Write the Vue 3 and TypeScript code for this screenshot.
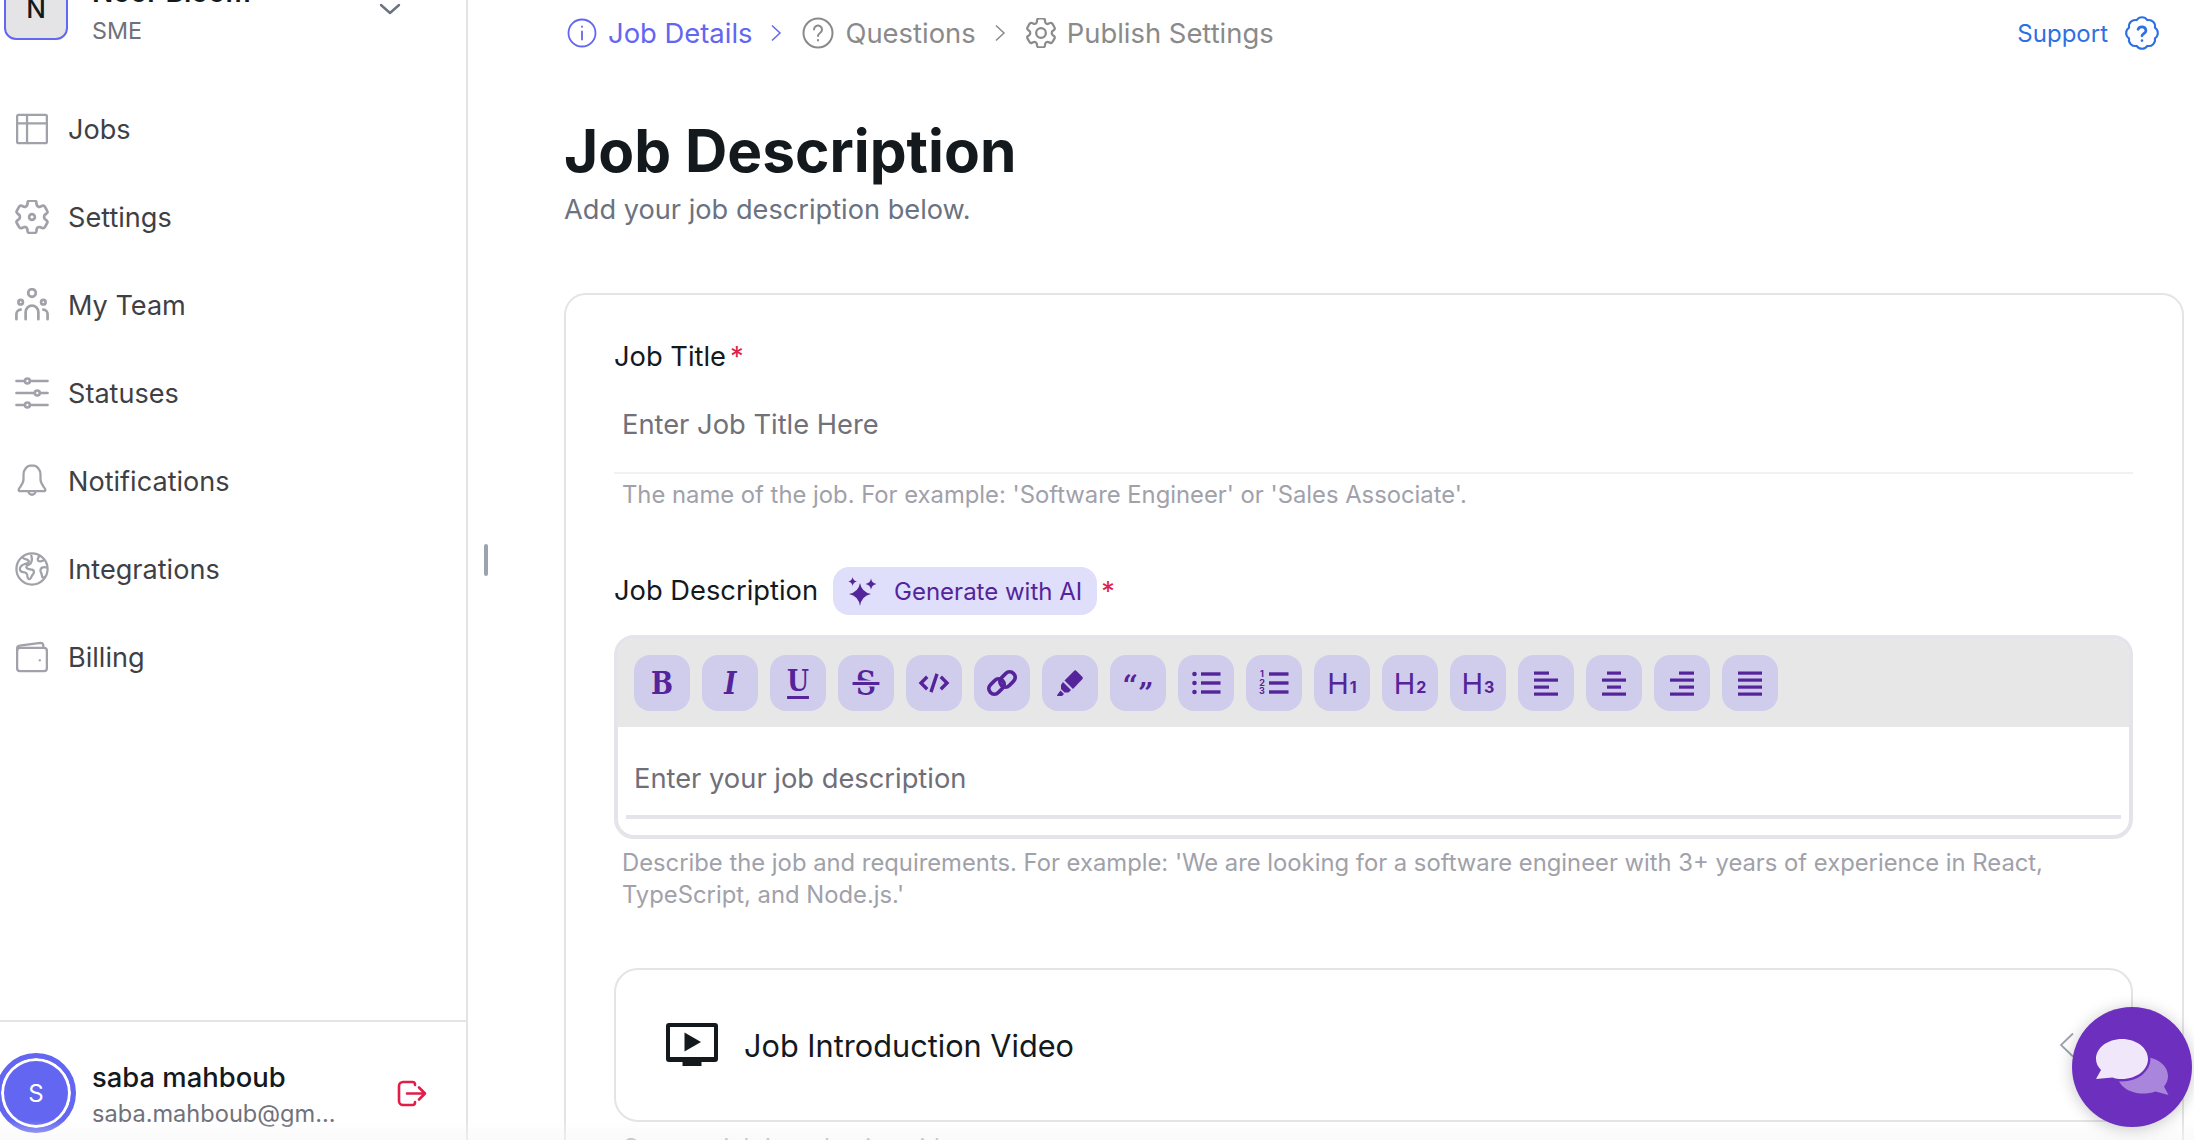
<script setup lang="ts">
interface NavItem {
  label: string
  paths: string[]
  box?: string
  stroke?: number
}

const gearPath =
  'M9.6 3.9c.1-.5.6-.9 1.1-.9h2.6c.5 0 1 .4 1.1.9l.2 1.3c.1.4.3.7.6.9l.2.1c.3.2.7.3 1.1.1l1.2-.5c.5-.2 1.1 0 1.4.5l1.3 2.3c.3.5.2 1.1-.3 1.4l-1 .8c-.3.3-.4.6-.4 1v.3c0 .4.1.7.4 1l1 .8c.4.4.5 1 .3 1.4l-1.3 2.3c-.3.5-.9.7-1.4.5l-1.2-.5c-.4-.1-.8-.1-1.1.1l-.2.1c-.3.2-.5.5-.6.9l-.2 1.3c-.1.5-.6.9-1.1.9h-2.6c-.5 0-1-.4-1.1-.9l-.2-1.3c-.1-.4-.3-.7-.6-.9l-.2-.1c-.3-.2-.7-.3-1.1-.1l-1.2.5c-.5.2-1.1 0-1.4-.5l-1.3-2.3c-.3-.5-.2-1.1.3-1.4l1-.8c.3-.3.4-.6.4-1v-.3c0-.4-.1-.7-.4-1l-1-.8c-.4-.4-.5-1-.3-1.4l1.3-2.3c.3-.5.9-.7 1.4-.5l1.2.5c.4.1.8.1 1.1-.1l.2-.1c.3-.2.5-.5.6-.9z'

const nav: NavItem[] = [
  { label: 'Jobs', paths: ['M1.5 3a1 1 0 0 1 1-1h19a1 1 0 0 1 1 1v18a1 1 0 0 1-1 1h-19a1 1 0 0 1-1-1z', 'M1.5 8h21', 'M8.5 2v20'] },
  {
    label: 'Settings',
    box: '2.6 2.6 18.8 18.8',
    stroke: 1.5,
    paths: [gearPath, 'M10.4 12a1.6 1.6 0 1 0 3.2 0 1.6 1.6 0 1 0-3.2 0z'],
  },
  {
    label: 'My Team',
    stroke: 1.9,
    paths: [
      'M9.3 3.5a2.7 2.7 0 1 0 5.4 0 2.7 2.7 0 1 0-5.4 0z',
      'M2.4 10a1.6 1.6 0 1 0 3.2 0 1.6 1.6 0 1 0-3.2 0z',
      'M18.4 10a1.6 1.6 0 1 0 3.2 0 1.6 1.6 0 1 0-3.2 0z',
      'M7.5 22v-5a4.5 4.5 0 0 1 9 0v5',
      'M1 22v-3.5a3.2 3.2 0 0 1 3-3.2',
      'M23 22v-3.5a3.2 3.2 0 0 0-3-3.2',
    ],
  },
  {
    label: 'Statuses',
    stroke: 1.8,
    paths: [
      'M1 3.5h6M10.5 3.5H23',
      'M1 12h13M17.5 12H23',
      'M1 20.5h6M10.5 20.5H23',
      'M7 3.5a1.75 1.75 0 1 0 3.5 0 1.75 1.75 0 1 0-3.5 0z',
      'M14 12a1.75 1.75 0 1 0 3.5 0 1.75 1.75 0 1 0-3.5 0z',
      'M7 20.5a1.75 1.75 0 1 0 3.5 0 1.75 1.75 0 1 0-3.5 0z',
    ],
  },
  {
    label: 'Notifications',
    paths: [
      'M12 1C8.2 1 6 4 6 7.5V11c0 3-2.5 5-3.4 7-.2.7.3 1.2 1 1.2h16.8c.7 0 1.2-.5 1-1.2-.9-2-3.4-4-3.4-7V7.5C18 4 15.8 1 12 1z',
      'M9.5 19.2a2.5 2.5 0 0 0 5 0',
    ],
  },
  {
    label: 'Integrations',
    paths: [
      'M1 12a11 11 0 1 0 22 0 11 11 0 1 0-22 0z',
      'M5.5 4c1 1.5 3 1 4 2s-1 2-2.5 2.5S3 10 3.5 12.5s3 1 4.5 2.5 0 3 1.5 4 2-2 3-3 1.5-3-.5-3.5-4-.5-4-2 2-1 3-2.5 1-4 .5-5.5',
      'M17 3c-1 1.5-1.5 3 0 3.5s2 0 3-.5',
      'M22.5 11c-2-.5-4 0-4.5 1.5s1 2.5 1 4 1 2 2 1',
    ],
  },
  {
    label: 'Billing',
    paths: [
      'M1.5 7.5a2 2 0 0 1 2-2h17a2 2 0 0 1 2 2V20a2 2 0 0 1-2 2h-17a2 2 0 0 1-2-2z',
      'M1.5 7.5V6a2 2 0 0 1 1.8-2L18 2a2 2 0 0 1 2 2v1.5',
      'M17.4 14.3h.2',
    ],
  },
]

interface Tool {
  key: string
  text?: string
  sub?: string
  cls?: string
}

const tools: Tool[] = [
  { key: 'bold', text: 'B', cls: 'slab' },
  { key: 'italic', text: 'I', cls: 'slab slant' },
  { key: 'underline', text: 'U', cls: 'slab under' },
  { key: 'strike', text: 'S', cls: 'slab strike' },
  { key: 'code' },
  { key: 'link' },
  { key: 'marker' },
  { key: 'quote' },
  { key: 'ul' },
  { key: 'ol' },
  { key: 'h1', text: 'H', sub: '1' },
  { key: 'h2', text: 'H', sub: '2' },
  { key: 'h3', text: 'H', sub: '3' },
  { key: 'left' },
  { key: 'center' },
  { key: 'right' },
  { key: 'justify' },
]

const alignBars: Record<string, [number, number][]> = {
  left: [[16, 31], [16, 40], [16, 31], [16, 40]],
  center: [[21, 35], [16, 40], [21, 35], [16, 40]],
  right: [[25, 40], [16, 40], [25, 40], [16, 40]],
  justify: [[16, 40], [16, 40], [16, 40], [16, 40]],
}
</script>

<template>
  <div class="page">
    <aside class="sidebar">
      <div class="org">
        <div class="org-avatar">N</div>
        <div class="org-text">
          <div class="org-name">Noor Bloom</div>
          <div class="org-role">SME</div>
        </div>
        <svg class="org-chevron" width="22" height="12" viewBox="0 0 22 12" fill="none" stroke="#6b7280" stroke-width="2.4" stroke-linecap="round" stroke-linejoin="round">
          <path d="M2 2l9 8 9-8" />
        </svg>
      </div>

      <nav class="nav">
        <a v-for="item in nav" :key="item.label" class="nav-item">
          <svg
            width="34"
            height="34"
            :viewBox="item.box ?? '0 0 24 24'"
            fill="none"
            stroke="#a1a1aa"
            :stroke-width="item.stroke ?? 1.6"
            stroke-linecap="round"
            stroke-linejoin="round"
          >
            <path v-for="d in item.paths" :key="d" :d="d" />
          </svg>
          <span>{{ item.label }}</span>
        </a>
      </nav>

      <div class="account">
        <div class="account-avatar"><span>S</span></div>
        <div class="account-text">
          <div class="account-name">saba mahboub</div>
          <div class="account-mail">saba.mahboub@gm...</div>
        </div>
        <svg class="logout" width="30" height="27" viewBox="0 0 30 27" fill="none" stroke="#e11d48" stroke-width="2.6" stroke-linecap="round" stroke-linejoin="round">
          <path d="M18 5V4.5A2.5 2.5 0 0 0 15.5 2H6a4 4 0 0 0-4 4v15a4 4 0 0 0 4 4h9.5a2.5 2.5 0 0 0 2.5-2.5V22" />
          <path d="M10 13.5h18M22 7.5l6 6-6 6" />
        </svg>
      </div>
    </aside>

    <main class="main">
      <header class="topbar">
        <div class="steps">
          <div class="step active">
            <svg width="30" height="30" viewBox="0 0 30 30" fill="none" stroke="currentColor" stroke-width="1.8" stroke-linecap="round">
              <circle cx="15" cy="15" r="13.5" />
              <path d="M15 13.5v8M15 8.5v.4" />
            </svg>
            <span>Job Details</span>
          </div>
          <svg class="sep active-sep" width="12" height="18" viewBox="0 0 12 18" fill="none" stroke="currentColor" stroke-width="1.5">
            <path d="M2 1.5l8 7.5-8 7.5" />
          </svg>
          <div class="step">
            <svg width="32" height="32" viewBox="0 0 32 32" fill="none" stroke="currentColor" stroke-width="2" stroke-linecap="round">
              <circle cx="16" cy="16" r="14.5" />
              <path d="M12 12.5a4 4 0 1 1 6 3.5c-1.3.8-2 1.500-2 3M16 23v.4" />
            </svg>
            <span>Questions</span>
          </div>
          <svg class="sep" width="12" height="18" viewBox="0 0 12 18" fill="none" stroke="currentColor" stroke-width="1.5">
            <path d="M2 1.5l8 7.5-8 7.5" />
          </svg>
          <div class="step">
            <svg width="30" height="30" viewBox="2.7 2.7 18.6 18.6" fill="none" stroke="currentColor" stroke-width="1.4" stroke-linejoin="round">
              <path :d="gearPath" />
              <circle cx="12" cy="12" r="3" />
            </svg>
            <span>Publish Settings</span>
          </div>
        </div>
        <a class="support">
          <span>Support</span>
          <svg width="38" height="38" viewBox="0 0 24 24" fill="none" stroke="currentColor" stroke-width="1.3" stroke-linecap="round" stroke-linejoin="round">
            <path d="M3.85 8.62a4 4 0 0 1 4.78-4.77 4 4 0 0 1 6.74 0 4 4 0 0 1 4.78 4.78 4 4 0 0 1 0 6.74 4 4 0 0 1-4.77 4.78 4 4 0 0 1-6.75 0 4 4 0 0 1-4.78-4.77 4 4 0 0 1 0-6.76Z" />
            <path stroke-width="1.7" d="M9.5 9.7a2.6 2.6 0 0 1 5 .8c0 1.7-2.5 2-2.5 3.3M12 16.8h.01" />
          </svg>
        </a>
      </header>

      <h1 class="title">Job Description</h1>
      <p class="subtitle">Add your job description below.</p>

      <section class="card">
        <label class="label">Job Title<em>*</em></label>
        <div class="input">Enter Job Title Here</div>
        <p class="hint first">The name of the job. For example: 'Software Engineer' or 'Sales Associate'.</p>

        <div class="desc-label">
          <label class="label">Job Description</label>
          <button type="button" class="ai-chip">
            <svg width="29" height="29" viewBox="0 0 29 29" fill="currentColor">
              <path d="M12 6Q13.5 15 23 17 13.5 19 12 29 10.5 19 1 17 10.5 15 12 6Z" />
              <path d="M4.6 0Q5.2 3.8 9 4.5 5.2 5.2 4.6 9 4 5.2 .2 4.5 4 3.8 4.6 0Z" />
              <path d="M23 1.5Q23.8 6.2 28.5 7 23.8 7.8 23 12.5 22.2 7.8 17.5 7 22.2 6.2 23 1.5Z" />
            </svg>
            <span>Generate with AI</span>
          </button>
          <em class="star">*</em>
        </div>

        <div class="editor">
          <div class="toolbar">
            <button v-for="tool in tools" :key="tool.key" type="button" class="tool" :class="tool.cls">
              <template v-if="tool.text">
                <span class="glyph">{{ tool.text }}</span><sub v-if="tool.sub">{{ tool.sub }}</sub>
              </template>
              <svg v-else width="56" height="56" viewBox="0 0 56 56" fill="currentColor">
                <g v-if="tool.key === 'code'" fill="none" stroke="currentColor" stroke-width="3.4" stroke-linecap="square">
                  <path d="M20 23l-5 5 5 5M36 23l5 5-5 5M30.5 20.5l-5 15" />
                </g>
                <g v-else-if="tool.key === 'link'" fill="none" stroke="currentColor" stroke-width="3.8">
                  <rect x="14" y="26" width="17" height="11" rx="5.5" transform="rotate(-45 22.5 31.5)" />
                  <rect x="25" y="19" width="17" height="11" rx="5.5" transform="rotate(-45 33.5 24.5)" />
                </g>
                <g v-else-if="tool.key === 'marker'">
                  <path d="M34 15.5l6.5 6.5q.8 1 0 2L31 34 22.5 25.5 32.5 15.5q.8-.6 1.5 0z" />
                  <path d="M21 27l8 8-2.5 2.5h-4l-3.5-3.5v-4z" />
                  <path d="M18.5 35.5l3.5 3.5-2 2h-4.5q-.8-.5-.2-1.3z" />
                </g>
                <text v-else-if="tool.key === 'quote'" x="28" y="40" text-anchor="middle" class="quote">“<tspan dy="8">”</tspan></text>
                <g v-else-if="tool.key === 'ul'">
                  <circle v-for="y in [19, 28, 37]" :key="y" cx="16.5" :cy="y" r="2.3" />
                  <rect v-for="y in [19, 28, 37]" :key="y" x="23" :y="y - 1.7" width="19.5" height="3.4" />
                </g>
                <g v-else-if="tool.key === 'ol'">
                  <text v-for="(n, i) in [1, 2, 3]" :key="n" x="16" :y="22 + i * 8.6" text-anchor="middle" class="mini">{{ n }}</text>
                  <rect v-for="y in [19, 28, 37]" :key="y" x="23" :y="y - 1.7" width="19.5" height="3.4" />
                </g>
                <g v-else>
                  <rect
                    v-for="(bar, i) in alignBars[tool.key]"
                    :key="i"
                    :x="bar[0]"
                    :y="16.5 + i * 7"
                    :width="bar[1] - bar[0]"
                    height="3.2"
                  />
                </g>
              </svg>
            </button>
          </div>
          <div class="editor-body">
            <div class="editor-placeholder">Enter your job description</div>
          </div>
        </div>
        <p class="hint">Describe the job and requirements. For example: 'We are looking for a software engineer with 3+ years of experience in React, TypeScript, and Node.js.'</p>

        <div class="video-card">
          <svg width="52" height="44" viewBox="0 0 52 44" fill="#14191d">
            <path fill-rule="evenodd" d="M3 0h46a3 3 0 0 1 3 3v33a3 3 0 0 1-3 3H3a3 3 0 0 1-3-3V3a3 3 0 0 1 3-3zm1 4v30h44V4z" />
            <path d="M18.5 9.5L35 19 18.5 28.5z" />
            <rect x="16.5" y="38" width="19" height="5" />
          </svg>
          <span>Job Introduction Video</span>
          <svg class="video-chevron" width="16" height="26" viewBox="0 0 16 26" fill="none" stroke="#9ca3af" stroke-width="1.8">
            <path d="M14 1.5L2 13l12 11.5" />
          </svg>
        </div>
        <p class="hint video-hint">Create a job introduction video</p>
      </section>
    </main>

    <div class="handle"></div>
    <div class="fade"></div>
    <button type="button" class="chat">
      <svg width="120" height="120" viewBox="0 0 120 120">
        <path fill="#a985dc" d="M71 50c14 0 25 8.5 25 19 0 4-1.6 7.5-4 10.5l4.5 8.5-13-3.5c-4 1.5-8 2-12.5 2-14 0-25-8-25-17.5S57 50 71 50z" />
        <ellipse cx="50" cy="52" rx="28.5" ry="22.5" fill="#6d2fbd" />
        <path fill="#f0e8fa" d="M50 32c14.4 0 26 8.9 26 20s-11.6 20-26 20c-3.500 0-6.500-.5-9.500-1.500L24 72l5-9c-3-3-5-7-5-11 0-11.100 11.600-20 26-20z" />
      </svg>
    </button>
  </div>
</template>

<style>
html,
body {
  margin: 0;
  height: 100%;
  overflow: hidden;
  background: #fff;
}
</style>

<style scoped>
.page {
  position: relative;
  display: flex;
  height: 1140px;
  overflow: hidden;
  background: #fff;
  color: #14191d;
  font-family: Inter, 'Liberation Sans', sans-serif;
}

.sidebar {
  display: flex;
  flex: 0 0 468px;
  flex-direction: column;
  box-sizing: border-box;
  border-right: 2px solid #e4e4e7;
}

.org {
  display: flex;
  align-items: flex-start;
  height: 40px;
  margin-top: -24px;
  padding-left: 4px;
}

.org-avatar {
  display: grid;
  flex: 0 0 64px;
  box-sizing: border-box;
  height: 64px;
  place-items: center;
  border: 2px solid #6366f1;
  border-radius: 12px;
  background: #e4e4e7;
  font-size: 26px;
  font-weight: 500;
}

.org-text {
  flex: 1;
  margin-left: 24px;
}

.org-name {
  height: 32px;
  font-size: 28px;
  font-weight: 600;
  line-height: 32px;
}

.org-role {
  margin-top: 7px;
  color: #71717a;
  font-size: 23.3px;
  line-height: 32px;
}

.org-chevron {
  margin: 27px 65px 0 0;
}

.nav {
  display: flex;
  flex: 1;
  flex-direction: column;
  padding: 69px 0 0 15px;
}

.nav-item {
  display: flex;
  align-items: center;
  gap: 19px;
  height: 88px;
  color: #3f3f46;
  font-size: 27.1px;
}

.account {
  display: flex;
  align-items: center;
  height: 120px;
  box-sizing: border-box;
  border-top: 2px solid #e4e4e7;
  padding-top: 24px;
}

.account-avatar {
  display: grid;
  flex: 0 0 80px;
  box-sizing: border-box;
  width: 80px;
  height: 80px;
  margin-left: -4px;
  place-items: center;
  border: 5px solid #6366f1;
  border-radius: 50%;
  background: #6366f1;
  box-shadow: inset 0 0 0 3px #fff;
  color: #fff;
  font-size: 24px;
}

.account-text {
  flex: 1;
  margin-left: 16px;
  padding-top: 5px;
}

.account-name {
  font-size: 27.4px;
  font-weight: 500;
  line-height: 36px;
}

.account-mail {
  margin-top: 1px;
  color: #71717a;
  font-size: 23.6px;
  line-height: 36px;
}

.logout {
  margin-right: 39px;
}

.main {
  flex: 1;
  min-width: 0;
  padding: 0 10px 0 96px;
}

.topbar {
  display: flex;
  align-items: center;
  justify-content: space-between;
  height: 66px;
  padding-right: 23px;
  padding-left: 3px;
}

.steps {
  display: flex;
  align-items: center;
  color: #8a8a8a;
  font-size: 27.4px;
}

.step {
  display: flex;
  align-items: center;
  gap: 11px;
}

.step.active,
.active-sep {
  color: #6366f1;
}

.sep {
  margin: 0 20px 0 18px;
}

.support {
  display: flex;
  align-items: center;
  gap: 15px;
  color: #2f6fe4;
  font-size: 24px;
}

.title {
  margin: 51px 0 0;
  font-size: 58.6px;
  font-weight: 700;
  line-height: 68px;
}

.subtitle {
  margin: 7px 0 0;
  color: #6b7280;
  font-size: 27.2px;
  line-height: 36px;
}

.card {
  box-sizing: border-box;
  margin-top: 65px;
  border: 2px solid #e4e4e7;
  border-radius: 22px;
  padding: 44px 49px 0 48px;
}

.label {
  display: block;
  font-size: 27.3px;
  line-height: 36px;
}

em {
  margin-left: 4px;
  color: #e11d48;
  font-style: normal;
}

.input {
  margin-top: 28px;
  border-bottom: 2px solid #f1f1f3;
  padding: 0 8px 25px;
  color: #71717a;
  font-size: 27.3px;
  line-height: 44px;
}

.hint {
  margin: 8px 0 0;
  padding-left: 8px;
  color: #a1a1aa;
  font-size: 23.8px;
  line-height: 32px;
}

.hint.first {
  margin-top: 5px;
}

.desc-label {
  display: flex;
  align-items: center;
  gap: 15px;
  margin-top: 56px;
}

.ai-chip {
  display: flex;
  align-items: center;
  gap: 17px;
  height: 48px;
  margin: 0;
  border: 0;
  border-radius: 16px;
  padding: 0 15px;
  background: #e0dffb;
  color: #55249a;
  font-family: inherit;
  font-size: 24px;
}

.star {
  margin-left: -11px;
  font-size: 27px;
}

.editor {
  overflow: hidden;
  margin-top: 20px;
  border: 4px solid #e4e5ea;
  border-radius: 20px;
}

.toolbar {
  display: flex;
  gap: 12px;
  height: 88px;
  box-sizing: border-box;
  padding: 16px;
  background: #e7e7e7;
}

.tool {
  position: relative;
  display: flex;
  flex: 0 0 56px;
  align-items: center;
  justify-content: center;
  height: 56px;
  margin: 0;
  border: 0;
  border-radius: 16px;
  padding: 0;
  background: #d0cdec;
  color: #55249a;
  font-family: Inter, sans-serif;
  font-size: 29px;
  line-height: 1;
}

.tool sub {
  margin: 7px 0 0 1px;
  font-size: 16px;
  font-weight: 700;
  line-height: 1;
}

.slab {
  font-family: 'DejaVu Serif', serif;
  font-size: 31px;
  font-weight: 700;
}

.slab .glyph {
  display: inline-block;
  transform: scaleX(0.84);
}

.slant {
  font-style: italic;
}

.under {
  font-size: 30px;
}

.under .glyph {
  border-bottom: 3px solid currentColor;
  padding-bottom: 2px;
  line-height: 26px;
}

.strike {
  font-size: 33px;
}

.strike .glyph {
  position: relative;
}

.strike .glyph::after {
  position: absolute;
  top: 15px;
  right: -4px;
  left: -4px;
  height: 3px;
  background: currentColor;
  box-shadow: 0 0 0 1.5px #d0cdec;
  content: '';
}

.quote {
  font-family: 'DejaVu Serif', serif;
  font-size: 27px;
  font-weight: 700;
}

.mini {
  font-family: Inter, sans-serif;
  font-size: 9px;
  font-weight: 700;
}

.editor-body {
  height: 108px;
  box-sizing: border-box;
  padding: 0 8px;
}

.editor-placeholder {
  height: 92px;
  box-sizing: border-box;
  border-bottom: 4px solid #e4e5ea;
  padding: 34px 8px 0;
  color: #6f6f78;
  font-size: 27.3px;
  line-height: 36px;
}

.video-card {
  display: flex;
  align-items: center;
  gap: 26px;
  box-sizing: border-box;
  height: 154px;
  margin-top: 57px;
  border: 2px solid #e4e4e7;
  border-radius: 24px;
  padding: 0 56px 0 50px;
  font-size: 30.7px;
}

.video-chevron {
  margin-left: auto;
}

.video-hint {
  margin-top: 10px;
}

.handle {
  position: absolute;
  top: 544px;
  left: 484px;
  width: 4px;
  height: 32px;
  border-radius: 2px;
  background: #9ca3af;
}

.chat {
  position: absolute;
  top: 1007px;
  left: 2072px;
  width: 120px;
  height: 120px;
  border: 0;
  border-radius: 50%;
  padding: 0;
  background: #6d2fbd;
  box-shadow: 0 2px 16px rgb(0 0 0 / 22%);
}

.chat svg {
  display: block;
}

.fade {
  position: absolute;
  right: 0;
  bottom: 0;
  left: 0;
  height: 20px;
  background: linear-gradient(transparent, rgb(245 245 245 / 50%));
  pointer-events: none;
}
</style>
